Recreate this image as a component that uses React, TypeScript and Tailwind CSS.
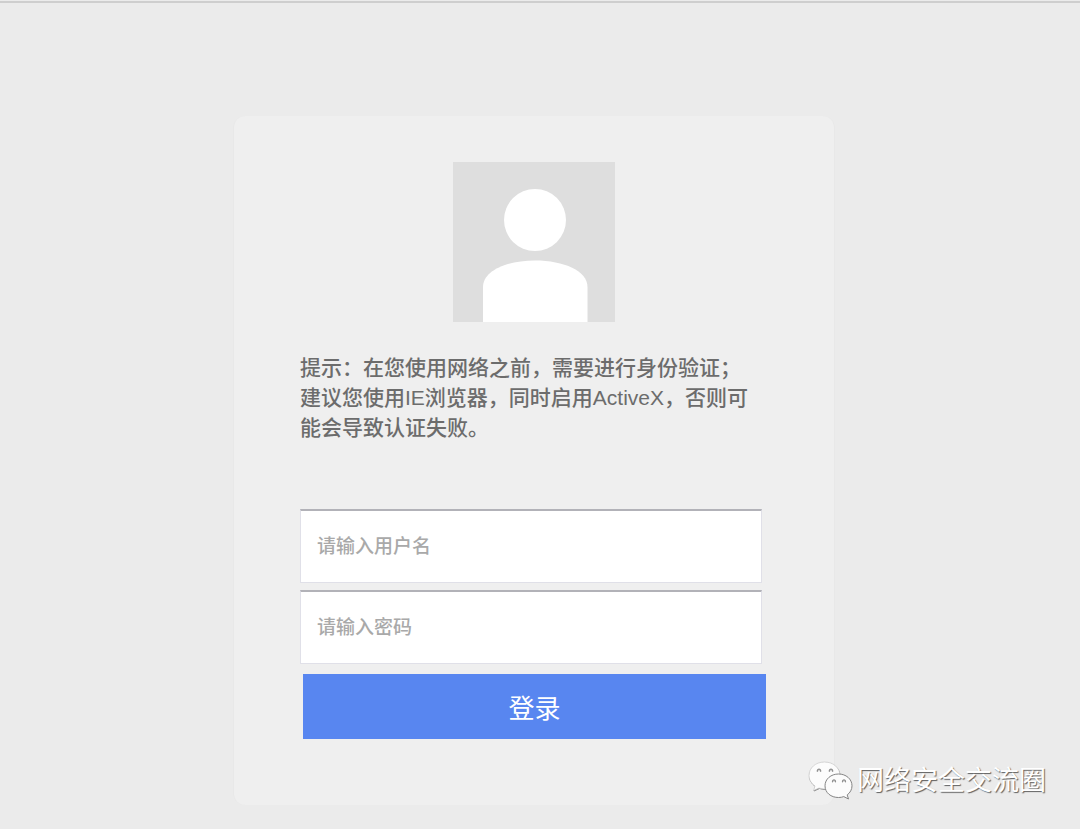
import { useState } from 'react';
import type { FormEvent, InputHTMLAttributes } from 'react';

interface FieldProps extends InputHTMLAttributes<HTMLInputElement> {
    label: string;
}

const Field = ({ label, ...props }: FieldProps) => (
    <div className="mr-1">
        <input
            {...props}
            aria-label={label}
            placeholder={label}
            className="block w-full h-[74px] px-4 bg-white text-[19px] font-medium text-[#555555] placeholder:text-[#a9a9a9] border border-[#e0e0e8] border-t-2 border-t-[#b2b2b8] rounded-none outline-none"
        />
    </div>
);

const Avatar = () => (
    <svg viewBox="0 0 162 160" className="w-[162px] h-[160px] mx-auto" role="img" aria-label="用户">
        <rect width="162" height="160" fill="#dedede" />
        <circle cx="82" cy="58" r="31" fill="#ffffff" />
        <path d="M30 160V125C30 109 53 98.500 82 98.500S134.500 109 134.500 125V160Z" fill="#ffffff" />
    </svg>
);

const WechatIcon = () => (
    <svg viewBox="0 0 46 40" className="w-[46px] h-10" aria-hidden="true">
        <g stroke="#8f8f8f" strokeWidth="1" fill="#8f8f8f">
            <path d="M18 2C9 2 2.500 8 2.500 15C2.500 19.500 5 23 8.500 25.500L7 30L12.500 27.500C14.500 28.200 16.500 28.500 19 28.500C27 28.500 33 22.500 33 15C33 8 27 2 18 2Z" />
        </g>
        <path
            d="M17.500 1C8.500 1 2 7 2 14.500C2 19 4.500 22.500 8 25L6.500 29.500L12 27C14 27.600 16 28 18.500 28C26.500 28 33 22 33 14.500C33 7 26.500 1 17.500 1Z"
            fill="#fcfcfc"
            stroke="#c2c2c2"
            strokeWidth="0.6"
        />
        <g fill="#d8d8d8" stroke="#8f8f8f" strokeWidth="1.200" strokeLinecap="round">
            <path d="M10.300 10.300C10 7.500 14 7.500 13.700 10.300" />
            <path d="M22.300 10.300C22 7.500 26 7.500 25.700 10.300" />
        </g>
        <path
            d="M31.500 13C24 13 18 18 18 24.800C18 31.800 24 36.500 31.500 36.500C33.500 36.500 35.200 36.200 36.800 35.600L41.500 38L40.200 33.900C43.200 31.700 45 28.400 45 24.800C45 18 39 13 31.500 13Z"
            fill="#fcfcfc"
            stroke="#858585"
            strokeWidth="1"
        />
        <g fill="#d8d8d8" stroke="#8f8f8f" strokeWidth="1.200" strokeLinecap="round">
            <path d="M25.500 20.800C25.300 18.300 28.700 18.300 28.500 20.800" />
            <path d="M35.500 20.800C35.300 18.300 38.700 18.300 38.500 20.800" />
        </g>
    </svg>
);

const App = () => {
    const [username, setUsername] = useState<string>('');
    const [password, setPassword] = useState<string>('');

    const handleSubmit = (e: FormEvent) => {
        e.preventDefault();
    };

    return (
        <div className="relative min-h-screen pt-px bg-[#ebebeb] font-['Liberation_Sans','Noto_Sans_CJK_SC',sans-serif]">
            <div className="border-t-2 border-[#cecece] pt-[113px] pb-6 pr-3">
                <main className="w-full max-w-[602px] mx-auto pt-[46px] pb-[66px] bg-[#efefef] border-x border-[#e8e8e8] rounded-xl">
                    <Avatar />
                    <form onSubmit={handleSubmit} className="pl-[66px] pr-[68px] pt-[31px]">
                        <p className="mb-[66px] text-[21px] leading-[30px] font-medium text-[#6c6c6c]">
                            提示：在您使用网络之前，需要进行身份验证；
                            <br />
                            建议您使用IE浏览器，同时启用ActiveX，否则可能会导致认证失败。
                        </p>
                        <div className="flex flex-col gap-[7px]">
                            <Field
                                label="请输入用户名"
                                type="text"
                                value={username}
                                onChange={(e) => setUsername(e.target.value)}
                            />
                            <Field
                                label="请输入密码"
                                type="password"
                                value={password}
                                onChange={(e) => setPassword(e.target.value)}
                            />
                        </div>
                        <div className="pl-[3px] pt-2.5">
                            <button
                                type="submit"
                                className="block w-full h-[65px] pt-1.5 bg-[#5886f0] text-[26px] text-white cursor-pointer"
                            >
                                登录
                            </button>
                        </div>
                    </form>
                </main>
            </div>
            <div className="absolute right-[34px] bottom-7 flex items-center gap-1">
                <WechatIcon />
                <span className="text-[27px] leading-10 text-white [text-shadow:1px_1px_1px_#606060]">
                    网络安全交流圈
                </span>
            </div>
        </div>
    );
};

export default App;
